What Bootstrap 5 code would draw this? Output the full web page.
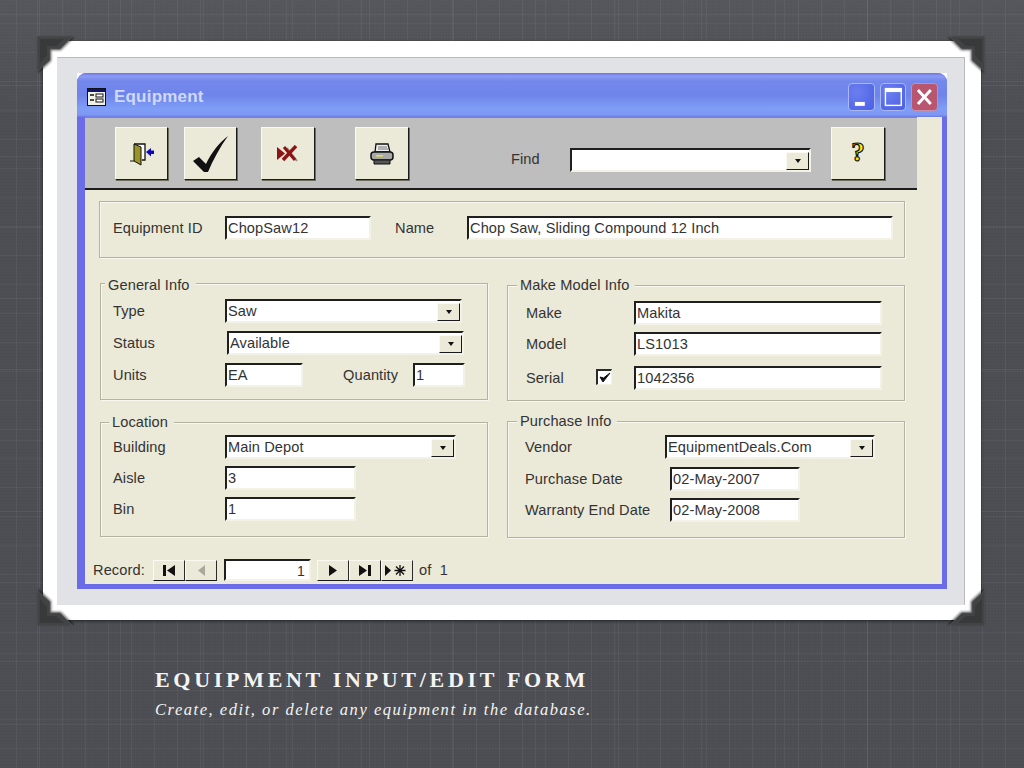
<!DOCTYPE html>
<html lang="en">
<head>
  <meta charset="UTF-8" />
  <title>Equipment Input/Edit Form</title>
  <link href="https://cdn.jsdelivr.net/npm/bootstrap@5.3.3/dist/css/bootstrap.min.css" rel="stylesheet"/>
  <style>
    body {
      margin: 0;
      height: 768px;
      overflow: hidden;
      background-color: #4c4e54;
      background-image:
        linear-gradient(180deg, rgba(255,255,255,.05), rgba(255,255,255,0) 120px),
        repeating-linear-gradient(90deg, rgba(255,255,255,.012) 0 1px, transparent 1px 3px),
        repeating-linear-gradient(0deg, rgba(0,0,0,.022) 0 1px, transparent 1px 3px),
        repeating-linear-gradient(90deg, transparent 0 16px, rgba(255,255,255,.05) 16px 17px, transparent 17px 23px),
        repeating-linear-gradient(90deg, transparent 0 37px, rgba(255,255,255,.05) 37px 38px, transparent 38px 83px),
        repeating-linear-gradient(0deg, transparent 0 19px, rgba(255,255,255,.04) 19px 20px, transparent 20px 29px),
        repeating-linear-gradient(0deg, transparent 0 43px, rgba(255,255,255,.05) 43px 44px, transparent 44px 71px);
      font-family: "Liberation Sans", Arial, sans-serif;
    }

    /* photo frame */
    .photo-frame {
      position: relative;
      width: 938px;
      height: 579px;
      margin: 41px 0 0 43px;
      padding: 16px 16px 15px 14px;
      background: #fff;
      box-shadow: 0 1px 3px rgba(0,0,0,.6);
    }
    .photo-mat {
      height: 100%;
      padding: 15px 17px 15px 19px;
      background: #e1e2e6;
      border: 1px solid #b9babd;
      border-left-color: #e1e2e6;
      border-bottom-color: #e1e2e6;
    }
    .corner { position: absolute; width: 37px; height: 37px; filter: drop-shadow(1px 1px 1px rgba(0,0,0,.55)); }
    .corner-tl { left: -6px; top: -5px; }
    .corner-tr { right: -4px; top: -5px; transform: scaleX(-1); }
    .corner-bl { left: -6px; bottom: -6px; transform: scaleY(-1); }
    .corner-br { right: -4px; bottom: -6px; transform: scale(-1); }

    /* window */
    .win-back { height: 516px; background: #fff; }
    .access-win {
      height: 100%;
      background: #6b6de8;
      border-radius: 9px 9px 0 0;
      padding: 0 5px 5px 8px;
    }
    .win-title {
      height: 44px;
      margin: 0 -5px 0 -8px;
      padding: 3px 9px 0 10px;
      border-radius: 9px 9px 0 0;
      background: linear-gradient(180deg, #6a74ea 0, #8c9af2 3px, #7488ec 8px, #6f84ea 22px, #7f9ef6 36px, #7d97f3 42px, #6d78e6 44px);
    }
    .win-name { margin-left: 8px; font-size: 17px; font-weight: 700; color: #cfd9fb; letter-spacing: .2px; }
    .win-btn {
      display: flex;
      align-items: center;
      justify-content: center;
      width: 26.7px;
      height: 28px;
      border: 1px solid #a9b8f5;
      border-radius: 4px;
      background: radial-gradient(circle at 30% 30%, #6c7ff0, #4a5fe4);
    }
    .win-btn-close { border-color: #c98fa6; background: #b9566f; }
    .win-gap { gap: 5px; }

    .win-body { height: 467px; background: #ebe9d8; }

    /* toolbar */
    .tool-strip {
      width: 832px;
      height: 73px;
      padding: 9px 0 0 30px;
      background: #bebebe;
      border-top: 1px solid #8f8a70;
      border-bottom: 2px solid #1c1c1c;
    }
    .tool-btn {
      display: flex;
      align-items: center;
      justify-content: center;
      width: 54px;
      height: 53px;
      padding: 0;
      background: #ebe9d8;
      border: 1px solid;
      border-color: #fbfaf0 #1a1a1a #1a1a1a #fbfaf0;
      box-shadow: 1px 1px 0 #6d6d60;
    }
    .tool-narrow { width: 53px; }
    .tool-check { margin-left: 16px; }
    .tool-cancel { margin-left: 24px; }
    .tool-print { margin-left: 40px; }
    .find-label { margin: 22px 0 0 102px; width: 59px; }
    .find-box { margin-top: 21px; }
    .tool-help { margin-left: 20px; }
    .help-mark {
      font-family: "Liberation Serif", serif;
      font-size: 27px;
      font-weight: 700;
      line-height: 1;
      color: #f4ee00;
      -webkit-text-stroke: 1.2px #111;
      margin-top: -2px;
    }

    /* form text and controls */
    .fld-label, .find-label, .grp-title, .rec-text { font-size: 14.6px; line-height: 20px; letter-spacing: .1px; color: #333; white-space: nowrap; }
    .sunken {
      display: flex;
      align-items: center;
      height: 24px;
      padding: 2px 0 0 1px;
      background: #fff;
      border-style: solid;
      border-width: 2px 2px 2px 2px;
      border-color: #1f1f1f #f4f2e6 #f4f2e6 #1f1f1f;
      font-size: 14.6px;
      letter-spacing: .1px;
      color: #333;
      white-space: nowrap;
      overflow: hidden;
    }
    .combo-arrow {
      display: flex;
      align-items: center;
      justify-content: center;
      width: 23px;
      height: 18px;
      margin-left: auto;
      margin-right: 0;
      background: #ebe9d8;
      border: 1px solid;
      border-color: #fbfaf0 #1a1a1a #1a1a1a #fbfaf0;
    }
    .combo-arrow::after {
      content: "";
      border-style: solid;
      border-width: 4px 3.5px 0 3.5px;
      border-color: #111 transparent transparent transparent;
    }

    .grp {
      position: relative;
      border: 1px solid #b5b39f;
      box-shadow: inset 1px 1px 0 #f9f8ee, 1px 1px 0 #f9f8ee;
    }
    .grp-title { position: absolute; background: #ebe9d8; padding: 0 6px 0 3px; }
    .grp-id { width: 806px; height: 57px; margin: 11px 0 0 14px; padding: 14px 0 0 13px; }
    .grp-general { width: 388px; height: 117px; margin-top: 25px; padding: 15px 0 0 12px; }
    .grp-make { width: 398px; height: 116px; margin: 27px 0 0 19px; padding: 15px 0 0 18px; }
    .grp-location { width: 388px; height: 115px; margin-top: 21px; padding: 12px 0 0 12px; }
    .grp-purchase { width: 398px; height: 117px; margin: 20px 0 0 19px; padding: 13px 0 0 17px; }
    .title-general { left: 4px; top: -9px; }
    .title-make { left: 9px; top: -11px; }
    .title-location { left: 8px; top: -11px; }
    .title-purchase { left: 9px; top: -11px; }
    .left-col { margin-left: 15px; }

    .fld-row { display: flex; align-items: center; }
    .row-gap-8 { margin-top: 8px; }
    .row-gap-7 { margin-top: 7px; }
    .row-gap-9 { margin-top: 10px; }
    .lbl-112 { width: 112px; }
    .lbl-108 { width: 108px; }
    .lbl-140 { width: 140px; }
    .lbl-145 { width: 145px; }
    .w-146 { width: 146px; }
    .w-426 { width: 426px; }
    .w-237 { width: 237px; }
    .w-78 { width: 78px; }
    .w-52 { width: 52px; }
    .w-248 { width: 248px; }
    .w-231 { width: 231px; }
    .w-131 { width: 131px; }
    .w-210 { width: 210px; }
    .w-130 { width: 130px; }
    .w-241 { width: 241px; }
    .shift-2 { margin-left: 2px; }
    .name-label { margin-left: 24px; width: 72px; }
    .qty-label { margin-left: 40px; width: 70px; }
    .serial-check {
      display: flex;
      align-items: center;
      justify-content: center;
      width: 16px;
      height: 16px;
      margin: -2px 22px 0 0;
      background: #fff;
      border-style: solid;
      border-width: 2px 1px 1px 2px;
      border-color: #2a2a2a #f4f2e6 #f4f2e6 #2a2a2a;
    }
    .serial-label { width: 70px; }

    /* record navigator */
    .rec-bar { margin: 21px 0 0 8px; }
    .rec-btn {
      display: flex;
      align-items: center;
      justify-content: center;
      width: 32px;
      height: 21px;
      padding: 0;
      background: #ebe9d8;
      border: 1px solid;
      border-color: #fbfaf0 #2a2a2a #1a1a1a #fbfaf0;
    }
    .rec-label { width: 60px; }
    .rec-num {
      width: 87px;
      height: 22px;
      margin: 0 6px 0 7px;
      padding-right: 4px;
      justify-content: flex-end;
      font-size: 14px;
    }
    .rec-of { margin-left: 6px; }

    /* caption */
    .caption { margin: 46px 0 0 155px; color: #f4f4f2; font-family: "Liberation Serif", "Times New Roman", serif; }
    .cap-head { font-size: 22px; font-weight: 700; line-height: 28px; letter-spacing: 3.7px; }
    .cap-sub { margin-top: 5px; font-size: 16.5px; font-style: italic; line-height: 22px; letter-spacing: 1.54px; }
  </style>
</head>
<body>

  <div class="photo-frame">
    <svg class="corner corner-tl" viewBox="0 0 37 37"><use href="#cornerShape"/></svg>
    <svg class="corner corner-tr" viewBox="0 0 37 37"><use href="#cornerShape"/></svg>
    <svg class="corner corner-bl" viewBox="0 0 37 37"><use href="#cornerShape"/></svg>
    <svg class="corner corner-br" viewBox="0 0 37 37"><use href="#cornerShape"/></svg>

    <div class="photo-mat">
      <div class="win-back">
        <div class="access-win">

          <!-- Title bar -->
          <div class="win-title d-flex align-items-center">
            <svg width="19" height="18" viewBox="0 0 19 18">
              <rect x=".5" y=".5" width="18" height="17" fill="#f2f1e8" stroke="#111"/>
              <rect x="1" y="1" width="17" height="3" fill="#10106e"/>
              <path d="M3 7h4M3 12h4" stroke="#111" stroke-width="1.5"/>
              <rect x="9" y="6" width="7" height="3" fill="#fff" stroke="#111"/>
              <rect x="9" y="11" width="7" height="3" fill="#fff" stroke="#111"/>
            </svg>
            <span class="win-name">Equipment</span>
            <div class="d-flex win-gap ms-auto">
              <div class="win-btn">
                <svg width="25" height="26" viewBox="0 0 25 26"><rect x="6" y="18" width="10" height="4" fill="#fff"/></svg>
              </div>
              <div class="win-btn">
                <svg width="25" height="26" viewBox="0 0 25 26"><rect x="4.500" y="4.500" width="16" height="17" fill="none" stroke="#fff" stroke-width="1.400"/><rect x="4" y="4" width="17" height="4" fill="#fff"/></svg>
              </div>
              <div class="win-btn win-btn-close">
                <svg width="25" height="26" viewBox="0 0 25 26"><path d="M6 6l13 14M19 6L6 20" stroke="#fff" stroke-width="3"/></svg>
              </div>
            </div>
          </div>

          <div class="win-body d-flex flex-column">

            <!-- Toolbar -->
            <div class="tool-strip d-flex align-items-start">
              <button class="tool-btn tool-narrow" type="button" aria-label="Exit">
                <svg width="26" height="26" viewBox="0 0 26 26">
                  <path d="M5 3h11v16h-3" fill="#fff" stroke="#111" stroke-width="1.300"/>
                  <path d="M5 3l7 3v18l-7-4z" fill="#9a9428" stroke="#111"/>
                  <path d="M1 20h4" stroke="#111"/>
                  <path d="M17 11l5-4v2.500h3v3.500h-3v2.500z" fill="#0a0ab4"/>
                </svg>
              </button>
              <button class="tool-btn tool-narrow tool-check" type="button" aria-label="Save">
                <svg width="36" height="38" viewBox="0 0 36 38">
                  <path d="M0 26L6 22L13 29C18 18 26 8 35 1C27 12 20 25 15 37H11z" fill="#111"/>
                </svg>
              </button>
              <button class="tool-btn tool-cancel" type="button" aria-label="Delete">
                <svg width="22" height="17" viewBox="0 0 22 17">
                  <path d="M10 3l10 13" stroke="#8f8f86" stroke-width="2"/>
                  <path d="M0 2l8 6.500-8 6.500z" fill="#8c1414"/>
                  <path d="M7 2l11 13" stroke="#8c1414" stroke-width="3"/>
                  <path d="M19 1L6 15" stroke="#8c1414" stroke-width="3.400"/>
                </svg>
              </button>
              <button class="tool-btn tool-print" type="button" aria-label="Print">
                <svg width="24" height="22" viewBox="0 0 24 22">
                  <path d="M6 1h12l2 8H5z" fill="#eee" stroke="#111" stroke-width="1.300"/>
                  <path d="M8 4h9M8 6h10" stroke="#777"/>
                  <rect x="1" y="9" width="22" height="8" rx="3" fill="#a9a9a9" stroke="#111" stroke-width="1.500"/>
                  <rect x="6" y="12" width="7" height="1.500" fill="#e4e43a"/>
                  <path d="M4 17h16v4H4z" fill="#555" stroke="#111"/>
                </svg>
              </button>
              <div class="find-label">Find</div>
              <div class="sunken w-241 find-box"><span class="combo-arrow"></span></div>
              <button class="tool-btn tool-help" type="button" aria-label="Help"><span class="help-mark">?</span></button>
            </div>

            <!-- Equipment ID / Name -->
            <div class="grp grp-id">
              <div class="fld-row">
                <div class="fld-label lbl-112">Equipment ID</div>
                <div class="sunken w-146">ChopSaw12</div>
                <div class="fld-label name-label">Name</div>
                <div class="sunken w-426">Chop Saw, Sliding Compound 12 Inch</div>
              </div>
            </div>

            <div class="d-flex left-col">
              <div class="grp grp-general">
                <span class="grp-title title-general">General Info</span>
                <div class="fld-row">
                  <div class="fld-label lbl-112">Type</div>
                  <div class="sunken w-237">Saw<span class="combo-arrow"></span></div>
                </div>
                <div class="fld-row row-gap-8">
                  <div class="fld-label lbl-112">Status</div>
                  <div class="sunken w-237 shift-2">Available<span class="combo-arrow"></span></div>
                </div>
                <div class="fld-row row-gap-8">
                  <div class="fld-label lbl-112">Units</div>
                  <div class="sunken w-78">EA</div>
                  <div class="fld-label qty-label">Quantity</div>
                  <div class="sunken w-52">1</div>
                </div>
              </div>
              <div class="grp grp-make">
                <span class="grp-title title-make">Make Model Info</span>
                <div class="fld-row">
                  <div class="fld-label lbl-108">Make</div>
                  <div class="sunken w-248">Makita</div>
                </div>
                <div class="fld-row row-gap-7">
                  <div class="fld-label lbl-108">Model</div>
                  <div class="sunken w-248">LS1013</div>
                </div>
                <div class="fld-row row-gap-9">
                  <div class="fld-label serial-label">Serial</div>
                  <div class="serial-check">
                    <svg width="12" height="12" viewBox="0 0 12 12"><path d="M1 5l3 5 7-9-6.500 5z" fill="#111" stroke="#111"/></svg>
                  </div>
                  <div class="sunken w-248">1042356</div>
                </div>
              </div>
            </div>

            <div class="d-flex left-col">
              <div class="grp grp-location">
                <span class="grp-title title-location">Location</span>
                <div class="fld-row">
                  <div class="fld-label lbl-112">Building</div>
                  <div class="sunken w-231">Main Depot<span class="combo-arrow"></span></div>
                </div>
                <div class="fld-row row-gap-7">
                  <div class="fld-label lbl-112">Aisle</div>
                  <div class="sunken w-131">3</div>
                </div>
                <div class="fld-row row-gap-7">
                  <div class="fld-label lbl-112">Bin</div>
                  <div class="sunken w-131">1</div>
                </div>
              </div>
              <div class="grp grp-purchase">
                <span class="grp-title title-purchase">Purchase Info</span>
                <div class="fld-row">
                  <div class="fld-label lbl-140">Vendor</div>
                  <div class="sunken w-210">EquipmentDeals.Com<span class="combo-arrow"></span></div>
                </div>
                <div class="fld-row row-gap-8">
                  <div class="fld-label lbl-145">Purchase Date</div>
                  <div class="sunken w-130">02-May-2007</div>
                </div>
                <div class="fld-row row-gap-7">
                  <div class="fld-label lbl-145">Warranty End Date</div>
                  <div class="sunken w-130">02-May-2008</div>
                </div>
              </div>
            </div>

            <!-- Record navigator -->
            <div class="d-flex align-items-center rec-bar">
              <div class="rec-text rec-label">Record:</div>
              <button class="rec-btn" type="button" aria-label="First">
                <svg width="16" height="13" viewBox="0 0 16 13"><path d="M2 1h3v11H2zM14 1v11L6 6.500z" fill="#111"/></svg>
              </button>
              <button class="rec-btn" type="button" aria-label="Previous">
                <svg width="16" height="13" viewBox="0 0 16 13"><path d="M12 1v11L5 6.500z" fill="#a9a89a"/></svg>
              </button>
              <div class="sunken rec-num">1</div>
              <button class="rec-btn" type="button" aria-label="Next">
                <svg width="16" height="13" viewBox="0 0 16 13"><path d="M4 1v11l8-5.500z" fill="#111"/></svg>
              </button>
              <button class="rec-btn" type="button" aria-label="Last">
                <svg width="16" height="13" viewBox="0 0 16 13"><path d="M2 1v11l8-5.500zM11 1h3v11h-3z" fill="#111"/></svg>
              </button>
              <button class="rec-btn" type="button" aria-label="New">
                <svg width="26" height="13" viewBox="0 0 26 13"><path d="M1 1v11l6-5.500z" fill="#111"/><path d="M16 1v11M10.500 6.500h11M12 2.500l8 8M20 2.500l-8 8" stroke="#111" stroke-width="1.300"/></svg>
              </button>
              <div class="rec-text rec-of">of&nbsp;&nbsp;1</div>
            </div>

          </div>
        </div>
      </div>
    </div>
  </div>

  <div class="caption">
    <div class="cap-head">EQUIPMENT INPUT/EDIT FORM</div>
    <div class="cap-sub">Create, edit, or delete any equipment in the database.</div>
  </div>

  <svg width="0" height="0" class="d-block">
    <defs>
      <g id="cornerShape">
        <path d="M0 0H36L23 13H13V24L0 36z" fill="#424345" stroke="#5a5a5a" stroke-width=".7"/>
        <path d="M3 3H27L19 10H10V19L3 27z" fill="#38393b"/>
      </g>
    </defs>
  </svg>

  <script src="https://cdn.jsdelivr.net/npm/bootstrap@5.3.3/dist/js/bootstrap.bundle.min.js"></script>
</body>
</html>
